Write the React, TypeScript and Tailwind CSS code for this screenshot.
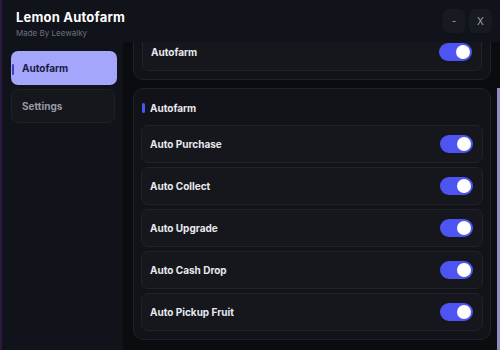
import { useState } from "react";

const options = [
  "Auto Purchase",
  "Auto Collect",
  "Auto Upgrade",
  "Auto Cash Drop",
  "Auto Pickup Fruit",
];

function Toggle({ on, onClick }: { on: boolean; onClick: () => void }) {
  return (
    <button
      onClick={onClick}
      className={`w-[33px] h-[18px] rounded-full flex items-center px-[2px] ${
        on ? "bg-[#4e54f2] justify-end" : "bg-[#2a2d36] justify-start"
      }`}
    >
      <span className="w-[14px] h-[14px] rounded-full bg-white" />
    </button>
  );
}

function Row({ label }: { label: string }) {
  const [on, setOn] = useState(true);
  return (
    <div className="h-[38px] flex items-center justify-between pl-[8px] pr-[9px] bg-[#15171d] border border-[#20232a] rounded-[7px]">
      <span className="text-[10px] font-bold text-[#e8e9ee]">{label}</span>
      <Toggle on={on} onClick={() => setOn(!on)} />
    </div>
  );
}

export default function App() {
  const [tab, setTab] = useState("Autofarm");

  return (
    <div
      className="w-[500px] h-[350px] bg-[#11131a] flex flex-col overflow-hidden border-l-2 border-[#2b1a40]"
      style={{ fontFamily: "Inter, 'Open Sans', sans-serif" }}
    >
      <div className="h-[42px] flex items-start justify-between pl-[14px] pr-[8px] pt-[9px]">
        <div>
          <h1 className="text-[13px] font-bold text-white leading-[16px] tracking-[0.2px]">Lemon Autofarm</h1>
          <p className="text-[8px] text-[#6b7080] leading-[12px] mt-[2px]">Made By Leewalky</p>
        </div>
        <div className="flex gap-[4px]">
          <button className="w-[22px] h-[24px] rounded-md bg-[#181a21] text-[10px] text-[#9ca3af]">-</button>
          <button className="w-[23px] h-[24px] rounded-md bg-[#181a21] text-[10px] text-[#9ca3af]">X</button>
        </div>
      </div>

      <div className="flex flex-1 min-h-0">
        <aside className="w-[121px] flex flex-col gap-[4px] pl-[9px] pt-[9px]">
          {["Autofarm", "Settings"].map((t) =>
            tab === t ? (
              <button
                key={t}
                onClick={() => setTab(t)}
                className="relative w-[106px] h-[34px] rounded-[7px] bg-[#a3a6fa] text-left pl-[11px] text-[10px] font-bold text-[#1c1a45]"
              >
                <span className="absolute left-[1px] top-[13px] w-[2px] h-[11px] rounded bg-[#3d40c8]" />
                {t}
              </button>
            ) : (
              <button
                key={t}
                onClick={() => setTab(t)}
                className="w-[104px] h-[34px] rounded-[7px] bg-[#15171d] border border-[#1f2128] text-left pl-[10px] text-[10px] font-bold text-[#959aa5]"
              >
                {t}
              </button>
            )
          )}
        </aside>

        <main className="flex-1 bg-[#0b0c10] relative overflow-hidden pl-[10px] pr-[9px]">
          <div className="flex flex-col gap-[8px] -mt-[18px]">
            <div className="bg-[#111319] border border-[#1f2128] rounded-[10px] p-[8px]">
              <div className="h-[38px] flex items-center justify-between pl-[8px] pr-[9px] bg-[#15171d] border border-[#20232a] rounded-[7px]">
                <span className="text-[10px] font-bold text-[#e8e9ee]">Autofarm</span>
                <Toggle on={true} onClick={() => {}} />
              </div>
            </div>

            <div className="bg-[#111319] border border-[#1f2128] rounded-[10px] px-[7px] pt-[9px] pb-[8px]">
              <div className="h-[20px] flex items-center gap-[5px] pl-[1px] mb-[7px]">
                <span className="w-[3px] h-[10px] rounded-sm bg-[#4e54f2]" />
                <span className="text-[10px] font-bold text-[#e8e9ee]">Autofarm</span>
              </div>
              <div className="flex flex-col gap-[4px]">
                {options.map((o) => (
                  <Row key={o} label={o} />
                ))}
              </div>
            </div>
          </div>
          <div className="absolute right-0 top-[46px] w-[3px] h-[270px] bg-[#8e8bc4]" />
        </main>
      </div>
    </div>
  );
}
